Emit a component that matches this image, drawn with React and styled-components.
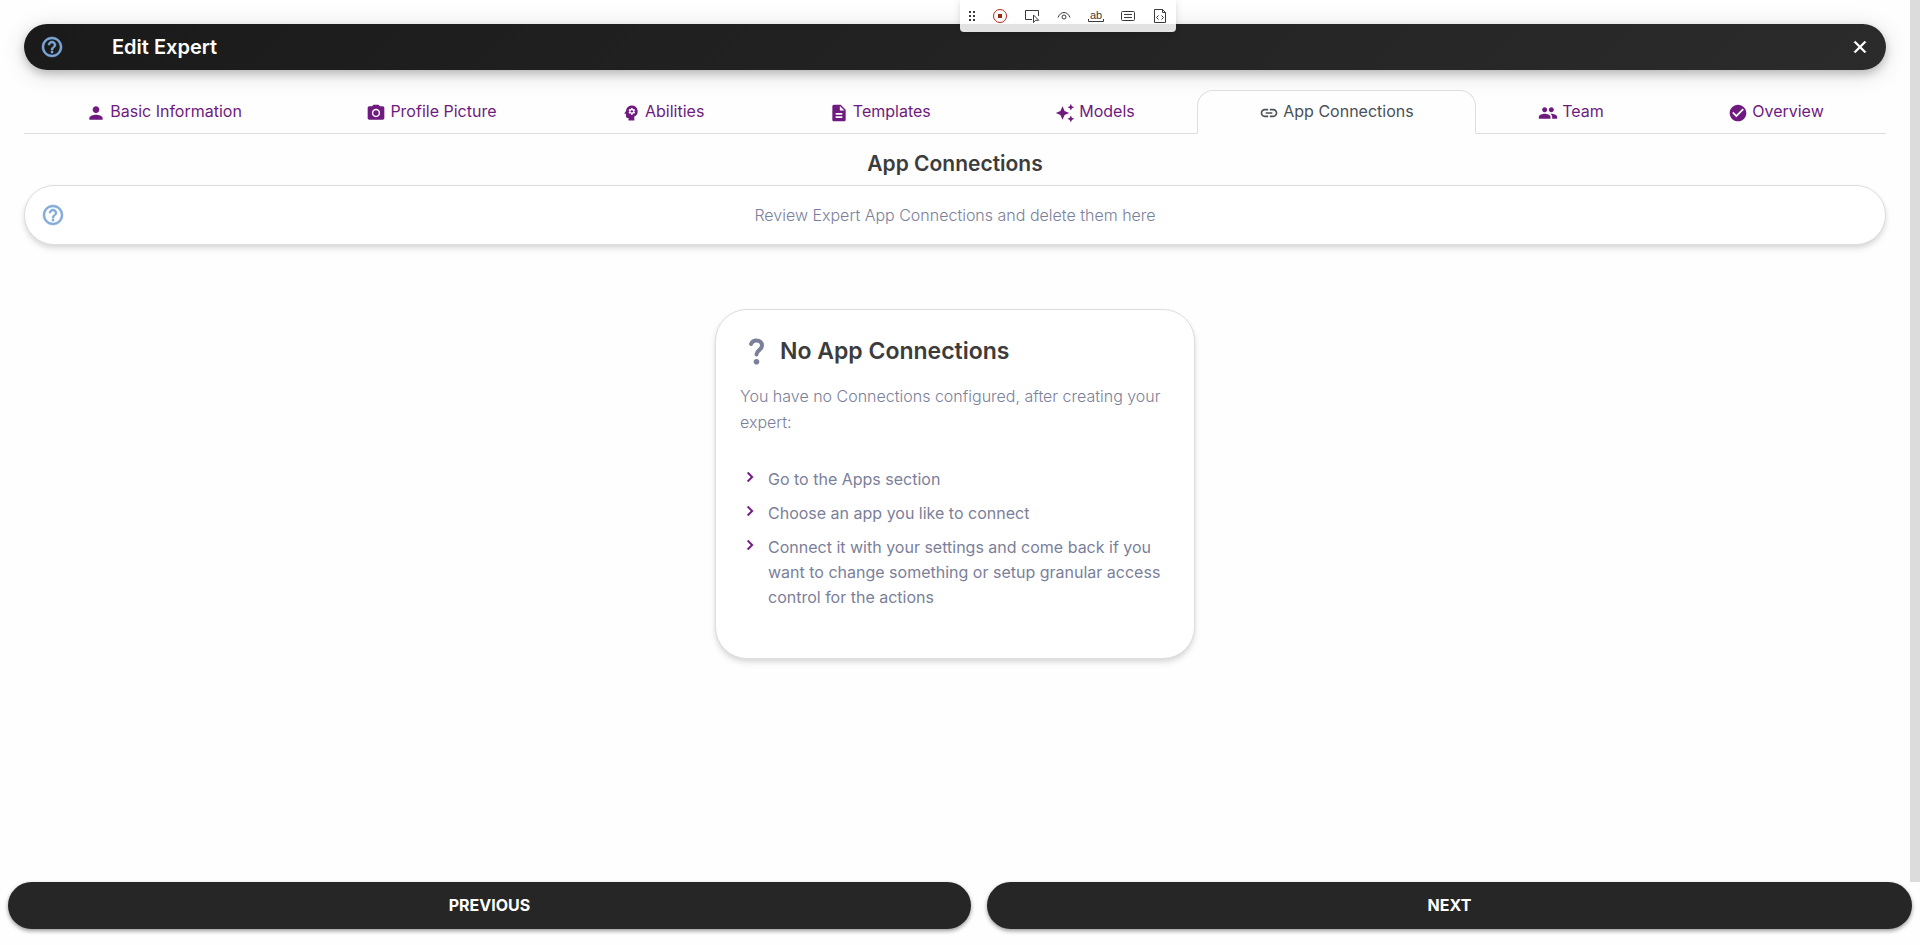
import React from "react";
import styled, { createGlobalStyle, css } from "styled-components";
import {
    MdAutoAwesome,
    MdCheckCircle,
    MdChevronRight,
    MdClose,
    MdDescription,
    MdHelpOutline,
    MdLink,
    MdPeople,
    MdPerson,
    MdPhotoCamera,
    MdPsychology,
} from "react-icons/md";


const GlobalStyle = createGlobalStyle`
* {
    box-sizing: border-box;
}

body {
    margin: 0;
    background-color: #fefefe;
    color: #7b809a;
    font-family: "Inter", sans-serif;
    font-size: 16px;
    line-height: 26px;
}
`;

const Page = styled.div`
display: flex;
flex-direction: column;
height: 100vh;
overflow: hidden;
`;

const ScrollArea = styled.div`
display: flex;
flex: 1;
min-height: 0;
`;

const ScrollTrack = styled.div`
width: 10px;
background-color: #dcdcdc;
`;

const Content = styled.main`
display: flex;
flex-direction: column;
flex: 1;
padding: 24px 24px 0;
`;

const HeaderBar = styled.header`
display: flex;
align-items: center;
height: 46px;
padding: 0 16px;
border-radius: 24px;
background: linear-gradient(135deg, #1a1a1a 0%, #2b2b2b 100%);
box-shadow: 0 4px 8px rgba(0, 0, 0, 0.2), 0 4px 24px rgba(0, 0, 0, 0.14);
`;

const Title = styled.h1`
flex: 1;
margin: 0 0 0 48px;
color: #fff;
font-size: 20px;
font-weight: 600;
line-height: 26px;
`;

// The md icons carry an empty bounding path, only the glyph gets the outline
const IconButton = styled.button`
display: flex;
padding: 0;
border: none;
background: none;
color: ${props => props.$color};
font-size: ${props => props.$size};
cursor: pointer;

path:not([fill="none"]) {
    stroke: currentColor;
    stroke-width: ${props => props.$bold ? "1px" : "0.5px"};
}
`;

const Tabs = styled.ul`
display: flex;
margin: 20px 0 0;
padding: 0;
border-bottom: 1px solid #dedede;
list-style: none;
`;

const TabItem = styled.li`
flex: 1 1 auto;
`;

const TabLink = styled.a`
display: flex;
align-items: center;
justify-content: center;
gap: 4px;
margin-bottom: -1px;
padding: 7px 16px 9px;
border: 1px solid transparent;
border-radius: 16px 16px 0 0;
color: #6f1a7e;
text-decoration: none;

svg {
    margin-top: 4px;
    font-size: 20px;
}

${props => props.$active && css`
border-color: #dedede #dedede #fefefe;
background-color: #fefefe;
color: #495057;
`}
`;

const SectionTitle = styled.h2`
margin: 13px 0 4px;
color: #3c3c3c;
font-size: 21px;
font-weight: 600;
line-height: 34px;
text-align: center;
`;

const panel = css`
border: 1px solid #dedede;
border-radius: 32px;
background-color: #fff;
box-shadow: 0 4px 6px rgba(0, 0, 0, 0.1), 0 2px 4px rgba(0, 0, 0, 0.06);
`;

const HintBar = styled.div`
${panel}
display: flex;
align-items: center;
padding: 16px;
`;

const HintText = styled.p`
flex: 1;
margin: 0 24px 0 0;
font-weight: 300;
text-align: center;
`;

const EmptyCard = styled.section`
${panel}
align-self: center;
width: 100%;
max-width: 480px;
margin-top: 64px;
padding: 24px 24px 48px;
`;

const EmptyHeader = styled.div`
display: flex;
align-items: center;
gap: 8px;
`;

const EmptyTitle = styled.h3`
margin: 0;
color: #3c3c3c;
font-size: 23px;
font-weight: 600;
line-height: 34px;
`;

const EmptyText = styled.p`
margin: 15px 0 32px;
font-weight: 300;
`;

const Steps = styled.ul`
display: flex;
flex-direction: column;
gap: 9px;
margin: 0;
padding: 0;
list-style: none;
line-height: 25px;
`;

const Step = styled.li`
display: flex;
gap: 8px;

svg {
    flex: none;
    width: 20px;
    height: 20px;
    color: #6f1a7e;
}

path:not([fill="none"]) {
    stroke: currentColor;
    stroke-width: 0.5px;
}
`;

const Footer = styled.footer`
display: flex;
gap: 16px;
padding: 0 8px 16px;
`;

const FooterButton = styled.button`
flex: 1 1 auto;
height: 47px;
padding: 0 24px 2px;
border: none;
border-radius: 24px;
background-color: #262626;
box-shadow: 0 2px 4px rgba(0, 0, 0, 0.4);
color: #fff;
font-family: inherit;
font-size: 16px;
font-weight: 700;
text-transform: uppercase;
cursor: pointer;
`;

// Floats over the header, starts at the middle of the page
const DebugBar = styled.div`
position: absolute;
top: 0;
left: 50%;
display: flex;
align-items: center;
gap: 12px;
height: 32px;
padding: 0 6px 0 8px;
border-radius: 0 0 4px 4px;
background-color: rgba(255, 255, 255, 0.87);
box-shadow: 0 2px 6px rgba(0, 0, 0, 0.15);
`;

const DebugButton = styled.button`
display: flex;
align-items: center;
justify-content: center;
width: ${props => props.$width || "20px"};
padding: 0;
border: none;
background: none;
color: #3b3b3b;

svg {
    flex: none;
}
`;

const QuestionIcon = () => (
    <svg width="32" height="32" viewBox="0 0 32 32" fill="none" stroke="#7b809a" aria-hidden="true">
        <path d="M11 9C12 6.500 14 5.500 16.300 5.500c3.400 0 5.700 2 5.700 5 0 4.500-5.500 4.700-5.500 9" strokeWidth="4" strokeLinecap="round" />
        <circle cx="16.500" cy="26.700" r="2.800" fill="#7b809a" stroke="none" />
    </svg>
);

const tabs = [
    { label: "Basic Information", icon: MdPerson },
    { label: "Profile Picture", icon: MdPhotoCamera },
    { label: "Abilities", icon: MdPsychology },
    { label: "Templates", icon: MdDescription },
    { label: "Models", icon: MdAutoAwesome },
    { label: "App Connections", icon: MdLink, active: true },
    { label: "Team", icon: MdPeople },
    { label: "Overview", icon: MdCheckCircle },
];

const steps = [
    "Go to the Apps section",
    "Choose an app you like to connect",
    "Connect it with your settings and come back if you want to change something or setup granular access control for the actions",
];

const debugTools = [
    {
        name: "Move",
        width: "10px",
        art: <path d="M4 3h2v2H4zM8 3h2v2H8zM4 7h2v2H4zM8 7h2v2H8zM4 11h2v2H4zM8 11h2v2H8z" fill="currentColor" stroke="none" />,
    },
    {
        name: "Record",
        art: <g stroke="#b5281c">
            <circle cx="8" cy="8" r="6.500" />
            <path d="M6 6h4v4H6z" fill="#a1260d" stroke="none" />
        </g>,
    },
    { name: "Pick locator", art: <path d="M8 11.500H1.500v-9h13V8M9.500 7v7.500l2-2.200h3.200z" /> },
    { name: "Assert visibility", art: <g><path d="M2 9.500C3.500 6 5.500 4.500 8 4.500s4.500 1.500 6 5" /><circle cx="8" cy="9" r="2" /></g> },
    {
        name: "Assert text",
        art: <g>
            <text x="8" y="11" fill="currentColor" stroke="none" fontSize="11" textAnchor="middle">ab</text>
            <path d="M.5 11v2.500h15V11" />
        </g>,
    },
    { name: "Assert value", art: <g><rect x="1.500" y="3.500" width="13" height="9" rx="1" /><path d="M4 6.500h8M4 9.500h8" /></g> },
    { name: "Assert snapshot", art: <path d="M2.500 1.500h8l3 3v10h-11zM10.500 1.500v3h3M6.500 7.500l-2 2 2 2M9.500 7.500l2 2-2 2" /> },
];

const DebugToolbar = () => (
    <DebugBar role="toolbar">
        {debugTools.map(tool => (
            <DebugButton key={tool.name} type="button" aria-label={tool.name} $width={tool.width}>
                <svg width="16" height="16" viewBox="0 0 16 16" fill="none" stroke="currentColor">{tool.art}</svg>
            </DebugButton>
        ))}
    </DebugBar>
);

const App = () => {
    return (
        <Page>
            <GlobalStyle />
            <ScrollArea>
                <Content>
                    <HeaderBar>
                        <IconButton type="button" aria-label="Help" $color="#7ba7d9" $size="24px"><MdHelpOutline /></IconButton>
                        <Title>Edit Expert</Title>
                        <IconButton type="button" aria-label="Close" $color="#fff" $size="20px" $bold><MdClose /></IconButton>
                    </HeaderBar>
                    <nav>
                        <Tabs>
                            {tabs.map(({ label, icon: Icon, active }) => (
                                <TabItem key={label}>
                                    <TabLink href="#" $active={active} aria-current={active ? "page" : undefined}>
                                        <Icon />
                                        {label}
                                    </TabLink>
                                </TabItem>
                            ))}
                        </Tabs>
                    </nav>
                    <SectionTitle>App Connections</SectionTitle>
                    <HintBar>
                        <IconButton type="button" aria-label="Help" $color="#82aadb" $size="24px"><MdHelpOutline /></IconButton>
                        <HintText>Review Expert App Connections and delete them here</HintText>
                    </HintBar>
                    <EmptyCard>
                        <EmptyHeader>
                            <QuestionIcon />
                            <EmptyTitle>No App Connections</EmptyTitle>
                        </EmptyHeader>
                        <EmptyText>You have no Connections configured, after creating your expert:</EmptyText>
                        <Steps>
                            {steps.map(step => (
                                <Step key={step}>
                                    <MdChevronRight />
                                    {step}
                                </Step>
                            ))}
                        </Steps>
                    </EmptyCard>
                </Content>
                <ScrollTrack />
            </ScrollArea>
            <Footer>
                <FooterButton type="button">Previous</FooterButton>
                <FooterButton type="button">Next</FooterButton>
            </Footer>
            <DebugToolbar />
        </Page>
    )
}

export default App;
